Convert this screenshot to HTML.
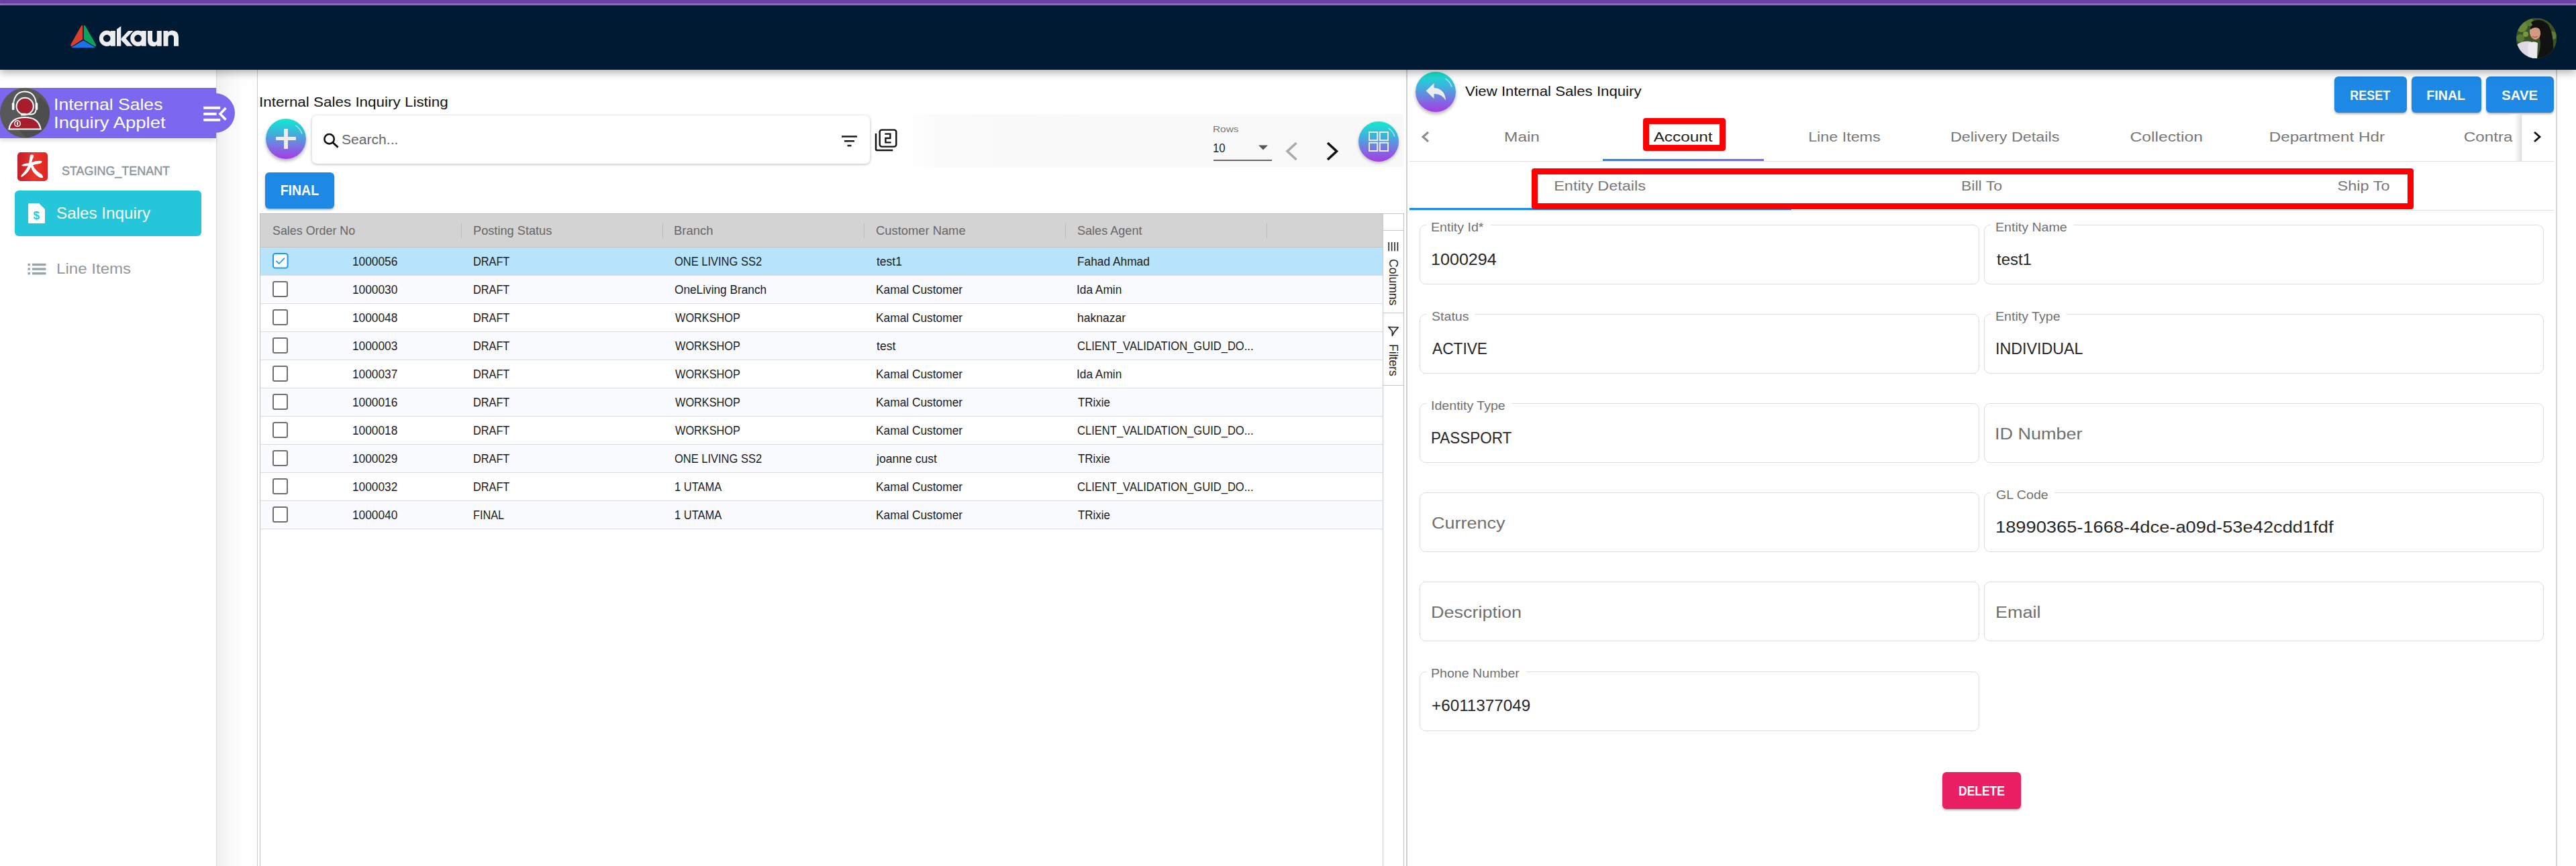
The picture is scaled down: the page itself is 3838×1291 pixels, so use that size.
<!DOCTYPE html><html><head><meta charset="utf-8"><title>akaun</title><style>
*{box-sizing:border-box;margin:0;padding:0}
html,body{width:3838px;height:1291px;overflow:hidden;background:#fff;font-family:"Liberation Sans",sans-serif;position:relative}
.a{position:absolute}
.t{position:absolute;white-space:nowrap;line-height:1}
</style></head><body>
<div class="a" style="left:0;top:0;width:3838px;height:6px;background:#6f43a7"></div>
<div class="a" style="left:0;top:5px;width:3838px;height:3px;background:#9474c0"></div>
<div class="a" style="left:0;top:8px;width:3838px;height:96px;background:#011a34;box-shadow:0 4px 12px rgba(0,0,0,.33);z-index:5"></div>
<svg class="a" style="left:0;top:0;z-index:6" width="280" height="90" viewBox="0 0 280 90">
<path d="M123.2 37.5 Q121.5 37.5 120.5 39.5 L105.8 65.5 Q104.5 68.5 106.5 69.5 L123.2 58.8 Z" fill="#d6402c"/>
<path d="M124.8 37.5 Q126.5 37.5 127.5 39.5 L142.5 65.5 Q143.8 68.5 141.8 69.5 L124.8 58.8 Z" fill="#0aa35c"/>
<path d="M124 60.2 L141 70.2 Q142 71.2 139.5 71.3 L108.5 71.3 Q106 71.2 107 70.2 Z" fill="#1b72e8"/>
<g fill="#ededed">
<path fill-rule="evenodd" d="M159.2 45.6 A11.3 11.6 0 1 0 159.2 68.9 A11.3 11.6 0 1 0 159.2 45.6 Z M159.2 51.8 A5.4 5.4 0 1 1 159.2 62.6 A5.4 5.4 0 1 1 159.2 51.8 Z"/>
<rect x="164.9" y="46" width="7" height="22.7"/>
<path d="M174 43.5 L180.3 39 L180.3 68.7 L174 68.7 Z"/>
<path d="M180.3 57.5 L191 46 L198.5 46 L187.5 57.2 L197.5 68.7 L189 68.7 L180.3 59.5 Z"/>
<path fill-rule="evenodd" d="M205.6 45.6 A11.3 11.6 0 1 0 205.6 68.9 A11.3 11.6 0 1 0 205.6 45.6 Z M205.6 51.8 A5.4 5.4 0 1 1 205.6 62.6 A5.4 5.4 0 1 1 205.6 51.8 Z"/>
<rect x="210.9" y="46" width="6.8" height="22.7"/>
<path d="M220 46 L227 46 L227 58.5 Q227 62.8 230.6 62.8 Q233.8 62.8 233.8 58.5 L233.8 46 L240.8 46 L240.8 68.7 L233.8 68.7 L233.8 66.5 Q232 69.2 228.5 69.2 Q220 69.2 220 59.5 Z"/>
<path d="M243.5 68.7 L243.5 46 L250.5 46 L250.5 48.3 Q252.3 45.5 256.3 45.5 Q266 45.5 266 55.5 L266 68.7 L259 68.7 L259 56.5 Q259 52.2 255 52.2 Q250.5 52.2 250.5 56.5 L250.5 68.7 Z"/>
</g></svg>
<div class="a" style="left:3749px;top:27px;width:60px;height:60px;border-radius:50%;overflow:hidden;z-index:6;background:#3d5a2a">
<svg width="60" height="60" viewBox="0 0 60 60">
<rect width="60" height="60" fill="#3c5226"/>
<circle cx="8" cy="12" r="9" fill="#6a8a3a"/><circle cx="20" cy="6" r="6" fill="#5c7c30"/><circle cx="6" cy="30" r="6" fill="#587a32"/><circle cx="54" cy="26" r="6" fill="#5f8034"/><circle cx="14" cy="24" r="4" fill="#7a9840"/>
<path d="M0 40 Q10 33 22 35 L27 60 L0 60 Z" fill="#dcd9e4"/>
<path d="M22 6 Q36 -2 48 10 Q58 28 54 60 L31 60 Q38 44 35 30 Q33 18 26 14 Z" fill="#121212"/>
<ellipse cx="28" cy="21.5" rx="8" ry="10.5" fill="#d39a84" transform="rotate(-12 28 21.5)"/>
<path d="M21 14 Q27 5 37 11 L36 17 Q29 11 21 17 Z" fill="#121212"/>
<path d="M24 27 Q28 30 32 27" fill="none" stroke="#b35a50" stroke-width="1.5"/>
<path d="M18 38 Q25 33 32 37 L31 60 L17 60 Z" fill="#ebe8f0"/>
</svg></div>
<div class="a" style="left:322px;top:104px;width:62px;height:1187px;background:linear-gradient(90deg,#efefef,#f8f8f8 30%,#fefefe 65%,#fff);border-left:1px solid #dadada"></div>
<div class="a" style="left:383px;top:104px;width:1px;height:1187px;background:#cccccc"></div>
<div class="a" style="left:0;top:131px;width:322px;height:74.5px;background:#7b68ee;box-shadow:0 4px 6px rgba(0,0,0,.12)"></div>
<div class="a" style="left:292px;top:139px;width:58px;height:59px;border-radius:0 29.5px 29.5px 0;background:#7b68ee"></div>
<svg class="a" style="left:0;top:131px" width="75" height="75" viewBox="0 0 75 75">
<defs><clipPath id="cc"><circle cx="37" cy="37.3" r="37"/></clipPath></defs>
<circle cx="37" cy="37.3" r="37" fill="#585858"/>
<path d="M60 14 L74 28 L74 75 L40 75 L20 55 Z" fill="#4d4d4d" clip-path="url(#cc)"/>
<path d="M19.5 31 Q19.5 5.5 37 5.5 Q54.5 5.5 54.5 31" fill="none" stroke="#fff" stroke-width="1.8"/>
<rect x="17.8" y="22" width="3.6" height="11" rx="1.6" fill="#fff"/><rect x="52.6" y="22" width="3.6" height="11" rx="1.6" fill="#fff"/>
<circle cx="37.2" cy="27.4" r="12.6" fill="#a61d2b" stroke="#fff" stroke-width="2"/>
<path d="M53.5 33 Q53 39 47 39.5 L34 39.5" fill="none" stroke="#fff" stroke-width="2"/><rect x="31" y="37.8" width="8" height="3.6" rx="1.5" fill="#fff"/>
<path d="M13.5 61.5 Q16 44 37 44 Q58 44 60.5 61.5 Z" fill="#a61d2b" stroke="#fff" stroke-width="2.2"/>
<circle cx="26" cy="53.3" r="5" fill="#fff"/><circle cx="26" cy="53.3" r="3.5" fill="#a61d2b"/><rect x="25" y="51" width="2" height="4.6" fill="#fff"/>
</svg>
<div class="t" style="left:80.35px;top:144.74px;font-size:23.7px;color:#fff;transform:scaleX(1.1214);transform-origin:0 50%;">Internal Sales</div>
<div class="t" style="left:80.26px;top:171.74px;font-size:23.7px;color:#fff;transform:scaleX(1.1610);transform-origin:0 50%;">Inquiry Applet</div>
<svg class="a" style="left:302px;top:157px" width="38" height="26" viewBox="0 0 38 26">
<rect x="1.2" y="1.8" width="25" height="3.9" fill="#fff"/><rect x="1.2" y="10.9" width="19.4" height="3.9" fill="#fff"/><rect x="1.2" y="19.8" width="25" height="3.9" fill="#fff"/>
<path d="M34.5 4 L26 12.8 L34.5 21.5" fill="none" stroke="#fff" stroke-width="3.6"/>
</svg>
<div class="a" style="left:26px;top:227px;width:45px;height:43px;border-radius:5px;background:linear-gradient(90deg,#c01f2c,#e8382a 55%,#e02222);overflow:hidden">
<svg width="45" height="43" viewBox="0 0 45 43"><path d="M19 4 Q25 2 24 7 Q22 11 21 15 Q29 12 36 13 Q38 15 33 17 Q27 18 23 19 Q26 27 35 32 Q39 35 38 38 Q33 39 28 34 Q22 29 20 22 Q16 31 8 36 Q4 38 6 34 Q12 28 16 20 Q11 21 6 20 Q7 17 17 16 Q18 11 19 4 Z" fill="#fff"/></svg></div>
<div class="t" style="left:91.88px;top:246.49px;font-size:18.8px;color:#8a949b;transform:scaleX(0.9547);transform-origin:0 50%;-webkit-text-stroke:0.45px #8a949b;">STAGING_TENANT</div>
<div class="a" style="left:22px;top:284px;width:278px;height:68px;border-radius:6px;background:#26c6da"></div>
<svg class="a" style="left:42px;top:303px" width="25" height="30" viewBox="0 0 25 30">
<path d="M1.5 0 L16 0 L25 9 L25 28.5 Q25 30 23.5 30 L1.5 30 Q0 30 0 28.5 L0 1.5 Q0 0 1.5 0 Z" fill="#fff"/>
<text x="12.3" y="23.8" font-size="17" font-weight="700" text-anchor="middle" fill="#26c6da" font-family="Liberation Sans">$</text>
</svg>
<div class="t" style="left:83.50px;top:306.84px;font-size:23.7px;color:#fff;transform:scaleX(1.0229);transform-origin:0 50%;">Sales Inquiry</div>
<svg class="a" style="left:41px;top:391.5px" width="28" height="18" viewBox="0 0 28 18">
<rect x="0.5" y="0.8" width="3.4" height="3.4" fill="#97a5ae"/><rect x="7" y="0.8" width="20.5" height="3.4" fill="#97a5ae"/>
<rect x="0.5" y="7.4" width="3.4" height="3.4" fill="#97a5ae"/><rect x="7" y="7.4" width="20.5" height="3.4" fill="#97a5ae"/>
<rect x="0.5" y="14" width="3.4" height="3.4" fill="#97a5ae"/><rect x="7" y="14" width="20.5" height="3.4" fill="#97a5ae"/>
</svg>
<div class="t" style="left:84.02px;top:389.85px;font-size:22.5px;color:#8f989e;transform:scaleX(1.0708);transform-origin:0 50%;">Line Items</div><div class="t" style="left:385.53px;top:142.12px;font-size:20.3px;color:#111;transform:scaleX(1.1059);transform-origin:0 50%;">Internal Sales Inquiry Listing</div>
<div class="a" style="left:396px;top:177px;width:60px;height:60px;border-radius:50%;background:linear-gradient(180deg,#12ead0 0%,#3fb0dc 38%,#7a74e2 68%,#a53be2 100%);box-shadow:0 3px 5px rgba(0,0,0,.3)">
<svg class="a" style="left:0;top:0" width="60" height="60" viewBox="0 0 60 60"><path d="M44.5 10 A24 24 0 0 1 54 22.5" fill="none" stroke="rgba(255,255,255,.65)" stroke-width="1.4"/></svg>
<div class="a" style="left:15.2px;top:26.8px;width:29.8px;height:5.4px;background:#ececec;border-radius:1px"></div>
<div class="a" style="left:27.3px;top:14.8px;width:5.4px;height:29.8px;background:#ececec;border-radius:1px"></div>
</div>
<div class="a" style="left:465px;top:172px;width:831px;height:72px;border-radius:7px;background:#fff;box-shadow:0 1px 4px rgba(0,0,0,.28)"></div>
<svg class="a" style="left:481px;top:198px" width="25" height="23" viewBox="0 0 25 23">
<circle cx="9.6" cy="9.2" r="7.2" fill="none" stroke="#111" stroke-width="2.6"/><path d="M14.6 14.2 L22.6 21.6" stroke="#111" stroke-width="2.8"/></svg>
<div class="t" style="left:508.84px;top:198.89px;font-size:19.5px;color:#666;transform:scaleX(1.0813);transform-origin:0 50%;">Search...</div>
<svg class="a" style="left:1254px;top:202px" width="24" height="17" viewBox="0 0 24 17">
<rect x="0" y="0.2" width="23" height="2.6" fill="#222"/><rect x="4" y="7" width="15" height="2.6" fill="#222"/><rect x="8.5" y="13.8" width="6" height="2.6" fill="#222"/></svg>
<svg class="a" style="left:1303px;top:192px" width="35" height="35" viewBox="0 0 35 35">
<path d="M2 7 L2 30.8 Q2 32 3.2 32 L27.3 32" fill="none" stroke="#111" stroke-width="2.5"/>
<rect x="7.7" y="1.6" width="24.6" height="25" rx="3" fill="none" stroke="#111" stroke-width="2.4"/>
<path d="M15.3 7.6 L23.4 7.6 L23.4 14 L16.4 14 L16.4 20.3 L24.6 20.3" fill="none" stroke="#111" stroke-width="2.3"/></svg>
<div class="a" style="left:1345px;top:170px;width:746px;height:79px;background:linear-gradient(90deg,rgba(250,250,250,0),#fafafa 8%,#f8f8f8)"></div>
<div class="t" style="left:1807.34px;top:186.17px;font-size:13.5px;color:#777;transform:scaleX(1.1380);transform-origin:0 50%;">Rows</div>
<div class="t" style="left:1807.32px;top:210.72px;font-size:19px;color:#222;transform:scaleX(0.8815);transform-origin:0 50%;">10</div>
<svg class="a" style="left:1874px;top:216px" width="16" height="8" viewBox="0 0 16 8"><path d="M1 0.5 L15 0.5 L8 7.5 Z" fill="#555"/></svg>
<div class="a" style="left:1807.5px;top:237.5px;width:87.5px;height:2px;background:#666"></div>
<svg class="a" style="left:1913px;top:210px" width="22" height="31" viewBox="0 0 22 31"><path d="M18.5 3 L5 15.5 L18.5 28" fill="none" stroke="#aaa" stroke-width="3.6"/></svg>
<svg class="a" style="left:1974px;top:210px" width="22" height="31" viewBox="0 0 22 31"><path d="M4 3 L17.5 15.5 L4 28" fill="none" stroke="#111" stroke-width="3.6"/></svg>
<div class="a" style="left:2024px;top:180.5px;width:60px;height:60px;border-radius:50%;background:linear-gradient(180deg,#12ead0 0%,#3fb0dc 38%,#7a74e2 68%,#a53be2 100%);box-shadow:0 2px 4px rgba(0,0,0,.25)">
<svg class="a" style="left:0;top:0" width="60" height="60" viewBox="0 0 60 60"><path d="M44.5 10 A24 24 0 0 1 54 22.5" fill="none" stroke="rgba(255,255,255,.65)" stroke-width="1.4"/></svg>
<svg class="a" style="left:15px;top:15.5px" width="30" height="30" viewBox="0 0 30 30">
<rect x="1" y="1" width="12.2" height="12.2" fill="none" stroke="#eee" stroke-width="2"/><rect x="16.8" y="1" width="12.2" height="12.2" fill="none" stroke="#eee" stroke-width="2"/>
<rect x="1" y="16.8" width="12.2" height="12.2" fill="none" stroke="#eee" stroke-width="2"/><rect x="16.8" y="16.8" width="12.2" height="12.2" fill="none" stroke="#eee" stroke-width="2"/></svg></div>
<div class="a" style="left:395px;top:257px;width:103px;height:54px;border-radius:6px;background:#1e88e5;box-shadow:0 2px 3px rgba(0,0,0,.3)"></div>
<div class="t" style="left:414.76px;top:274.47px;font-size:21.3px;color:#fff;font-weight:700;transform:scaleX(0.9155);transform-origin:31.74px 50%;">FINAL</div>
<div class="a" style="left:387px;top:318px;width:1705px;height:980px;border:1px solid #bcc1c6;background:#fff"></div>
<div class="a" style="left:388px;top:319px;width:1672px;height:50px;background:#d3d3d3;border-bottom:1px solid #c4c4c4"></div>
<div class="t" style="left:405.79px;top:336.13px;font-size:17.8px;color:#666;transform:scaleX(1.0048);transform-origin:0 50%;">Sales Order No</div>
<div class="t" style="left:704.51px;top:336.13px;font-size:17.8px;color:#666;transform:scaleX(1.0233);transform-origin:0 50%;">Posting Status</div>
<div class="t" style="left:1004.48px;top:336.13px;font-size:17.8px;color:#666;transform:scaleX(1.0394);transform-origin:0 50%;">Branch</div>
<div class="t" style="left:1305.07px;top:336.13px;font-size:17.8px;color:#666;transform:scaleX(1.0322);transform-origin:0 50%;">Customer Name</div>
<div class="t" style="left:1605.18px;top:336.13px;font-size:17.8px;color:#666;transform:scaleX(1.0163);transform-origin:0 50%;">Sales Agent</div>
<div class="a" style="left:687px;top:333px;width:1px;height:22px;background:#bdbdbd"></div>
<div class="a" style="left:987px;top:333px;width:1px;height:22px;background:#bdbdbd"></div>
<div class="a" style="left:1287px;top:333px;width:1px;height:22px;background:#bdbdbd"></div>
<div class="a" style="left:1587px;top:333px;width:1px;height:22px;background:#bdbdbd"></div>
<div class="a" style="left:1887px;top:333px;width:1px;height:22px;background:#bdbdbd"></div>
<div class="a" style="left:388px;top:369.0px;width:1672px;height:42.0px;background:#b7e4fb;border-bottom:1px solid #dadde2"></div>
<svg class="a" style="left:405.8px;top:377.2px" width="24" height="24" viewBox="0 0 24 24"><rect x="1" y="1" width="21.6" height="21.6" rx="3.2" fill="#fff" stroke="#2196f3" stroke-width="2"/><path d="M5.5 11.8 L9.8 16 L18 7.6" fill="none" stroke="#2196f3" stroke-width="1.7"/></svg>
<div class="t" style="left:524.68px;top:380.66px;font-size:18px;color:#1a1a1a;transform:scaleX(0.9600);transform-origin:0 50%;">1000056</div>
<div class="t" style="left:704.66px;top:380.66px;font-size:18px;color:#1a1a1a;transform:scaleX(0.9050);transform-origin:0 50%;">DRAFT</div>
<div class="t" style="left:1005.22px;top:380.66px;font-size:18px;color:#1a1a1a;transform:scaleX(0.9156);transform-origin:0 50%;">ONE LIVING SS2</div>
<div class="t" style="left:1305.74px;top:380.66px;font-size:18px;color:#1a1a1a;transform:scaleX(0.9712);transform-origin:0 50%;">test1</div>
<div class="t" style="left:1604.58px;top:380.66px;font-size:18px;color:#1a1a1a;transform:scaleX(0.9619);transform-origin:0 50%;">Fahad Ahmad</div>
<div class="a" style="left:388px;top:411.0px;width:1672px;height:42.0px;background:#f9fbfe;border-bottom:1px solid #dadde2"></div>
<div class="a" style="left:405.8px;top:419.2px;width:23.6px;height:23.6px;border:2px solid #6e6e6e;border-radius:3.2px;background:#fff"></div>
<div class="t" style="left:524.68px;top:422.66px;font-size:18px;color:#1a1a1a;transform:scaleX(0.9600);transform-origin:0 50%;">1000030</div>
<div class="t" style="left:704.66px;top:422.66px;font-size:18px;color:#1a1a1a;transform:scaleX(0.9050);transform-origin:0 50%;">DRAFT</div>
<div class="t" style="left:1005.18px;top:422.66px;font-size:18px;color:#1a1a1a;transform:scaleX(0.9583);transform-origin:0 50%;">OneLiving Branch</div>
<div class="t" style="left:1304.58px;top:422.66px;font-size:18px;color:#1a1a1a;transform:scaleX(0.9629);transform-origin:0 50%;">Kamal Customer</div>
<div class="t" style="left:1604.41px;top:422.66px;font-size:18px;color:#1a1a1a;transform:scaleX(0.9600);transform-origin:0 50%;">Ida Amin</div>
<div class="a" style="left:388px;top:453.0px;width:1672px;height:42.0px;background:#fff;border-bottom:1px solid #dadde2"></div>
<div class="a" style="left:405.8px;top:461.2px;width:23.6px;height:23.6px;border:2px solid #6e6e6e;border-radius:3.2px;background:#fff"></div>
<div class="t" style="left:524.68px;top:464.66px;font-size:18px;color:#1a1a1a;transform:scaleX(0.9600);transform-origin:0 50%;">1000048</div>
<div class="t" style="left:704.66px;top:464.66px;font-size:18px;color:#1a1a1a;transform:scaleX(0.9050);transform-origin:0 50%;">DRAFT</div>
<div class="t" style="left:1005.93px;top:464.66px;font-size:18px;color:#1a1a1a;transform:scaleX(0.9050);transform-origin:0 50%;">WORKSHOP</div>
<div class="t" style="left:1304.58px;top:464.66px;font-size:18px;color:#1a1a1a;transform:scaleX(0.9629);transform-origin:0 50%;">Kamal Customer</div>
<div class="t" style="left:1604.78px;top:464.66px;font-size:18px;color:#1a1a1a;transform:scaleX(0.9750);transform-origin:0 50%;">haknazar</div>
<div class="a" style="left:388px;top:495.0px;width:1672px;height:42.0px;background:#f9fbfe;border-bottom:1px solid #dadde2"></div>
<div class="a" style="left:405.8px;top:503.2px;width:23.6px;height:23.6px;border:2px solid #6e6e6e;border-radius:3.2px;background:#fff"></div>
<div class="t" style="left:524.68px;top:506.66px;font-size:18px;color:#1a1a1a;transform:scaleX(0.9600);transform-origin:0 50%;">1000003</div>
<div class="t" style="left:704.66px;top:506.66px;font-size:18px;color:#1a1a1a;transform:scaleX(0.9050);transform-origin:0 50%;">DRAFT</div>
<div class="t" style="left:1005.93px;top:506.66px;font-size:18px;color:#1a1a1a;transform:scaleX(0.9050);transform-origin:0 50%;">WORKSHOP</div>
<div class="t" style="left:1305.73px;top:506.66px;font-size:18px;color:#1a1a1a;transform:scaleX(0.9750);transform-origin:0 50%;">test</div>
<div class="t" style="left:1605.16px;top:506.66px;font-size:18px;color:#1a1a1a;transform:scaleX(0.9199);transform-origin:0 50%;">CLIENT_VALIDATION_GUID_DO...</div>
<div class="a" style="left:388px;top:537.0px;width:1672px;height:42.0px;background:#fff;border-bottom:1px solid #dadde2"></div>
<div class="a" style="left:405.8px;top:545.2px;width:23.6px;height:23.6px;border:2px solid #6e6e6e;border-radius:3.2px;background:#fff"></div>
<div class="t" style="left:524.68px;top:548.66px;font-size:18px;color:#1a1a1a;transform:scaleX(0.9600);transform-origin:0 50%;">1000037</div>
<div class="t" style="left:704.66px;top:548.66px;font-size:18px;color:#1a1a1a;transform:scaleX(0.9050);transform-origin:0 50%;">DRAFT</div>
<div class="t" style="left:1005.93px;top:548.66px;font-size:18px;color:#1a1a1a;transform:scaleX(0.9050);transform-origin:0 50%;">WORKSHOP</div>
<div class="t" style="left:1304.58px;top:548.66px;font-size:18px;color:#1a1a1a;transform:scaleX(0.9629);transform-origin:0 50%;">Kamal Customer</div>
<div class="t" style="left:1604.41px;top:548.66px;font-size:18px;color:#1a1a1a;transform:scaleX(0.9600);transform-origin:0 50%;">Ida Amin</div>
<div class="a" style="left:388px;top:579.0px;width:1672px;height:42.0px;background:#f9fbfe;border-bottom:1px solid #dadde2"></div>
<div class="a" style="left:405.8px;top:587.2px;width:23.6px;height:23.6px;border:2px solid #6e6e6e;border-radius:3.2px;background:#fff"></div>
<div class="t" style="left:524.68px;top:590.66px;font-size:18px;color:#1a1a1a;transform:scaleX(0.9600);transform-origin:0 50%;">1000016</div>
<div class="t" style="left:704.66px;top:590.66px;font-size:18px;color:#1a1a1a;transform:scaleX(0.9050);transform-origin:0 50%;">DRAFT</div>
<div class="t" style="left:1005.93px;top:590.66px;font-size:18px;color:#1a1a1a;transform:scaleX(0.9050);transform-origin:0 50%;">WORKSHOP</div>
<div class="t" style="left:1304.58px;top:590.66px;font-size:18px;color:#1a1a1a;transform:scaleX(0.9629);transform-origin:0 50%;">Kamal Customer</div>
<div class="t" style="left:1605.62px;top:590.66px;font-size:18px;color:#1a1a1a;transform:scaleX(0.9421);transform-origin:0 50%;">TRixie</div>
<div class="a" style="left:388px;top:621.0px;width:1672px;height:42.0px;background:#fff;border-bottom:1px solid #dadde2"></div>
<div class="a" style="left:405.8px;top:629.2px;width:23.6px;height:23.6px;border:2px solid #6e6e6e;border-radius:3.2px;background:#fff"></div>
<div class="t" style="left:524.68px;top:632.66px;font-size:18px;color:#1a1a1a;transform:scaleX(0.9600);transform-origin:0 50%;">1000018</div>
<div class="t" style="left:704.66px;top:632.66px;font-size:18px;color:#1a1a1a;transform:scaleX(0.9050);transform-origin:0 50%;">DRAFT</div>
<div class="t" style="left:1005.93px;top:632.66px;font-size:18px;color:#1a1a1a;transform:scaleX(0.9050);transform-origin:0 50%;">WORKSHOP</div>
<div class="t" style="left:1304.58px;top:632.66px;font-size:18px;color:#1a1a1a;transform:scaleX(0.9629);transform-origin:0 50%;">Kamal Customer</div>
<div class="t" style="left:1605.16px;top:632.66px;font-size:18px;color:#1a1a1a;transform:scaleX(0.9199);transform-origin:0 50%;">CLIENT_VALIDATION_GUID_DO...</div>
<div class="a" style="left:388px;top:663.0px;width:1672px;height:42.0px;background:#f9fbfe;border-bottom:1px solid #dadde2"></div>
<div class="a" style="left:405.8px;top:671.2px;width:23.6px;height:23.6px;border:2px solid #6e6e6e;border-radius:3.2px;background:#fff"></div>
<div class="t" style="left:524.68px;top:674.66px;font-size:18px;color:#1a1a1a;transform:scaleX(0.9600);transform-origin:0 50%;">1000029</div>
<div class="t" style="left:704.66px;top:674.66px;font-size:18px;color:#1a1a1a;transform:scaleX(0.9050);transform-origin:0 50%;">DRAFT</div>
<div class="t" style="left:1005.22px;top:674.66px;font-size:18px;color:#1a1a1a;transform:scaleX(0.9156);transform-origin:0 50%;">ONE LIVING SS2</div>
<div class="t" style="left:1306.43px;top:674.66px;font-size:18px;color:#1a1a1a;transform:scaleX(0.9764);transform-origin:0 50%;">joanne cust</div>
<div class="t" style="left:1605.62px;top:674.66px;font-size:18px;color:#1a1a1a;transform:scaleX(0.9421);transform-origin:0 50%;">TRixie</div>
<div class="a" style="left:388px;top:705.0px;width:1672px;height:42.0px;background:#fff;border-bottom:1px solid #dadde2"></div>
<div class="a" style="left:405.8px;top:713.2px;width:23.6px;height:23.6px;border:2px solid #6e6e6e;border-radius:3.2px;background:#fff"></div>
<div class="t" style="left:524.68px;top:716.66px;font-size:18px;color:#1a1a1a;transform:scaleX(0.9600);transform-origin:0 50%;">1000032</div>
<div class="t" style="left:704.66px;top:716.66px;font-size:18px;color:#1a1a1a;transform:scaleX(0.9050);transform-origin:0 50%;">DRAFT</div>
<div class="t" style="left:1004.74px;top:716.66px;font-size:18px;color:#1a1a1a;transform:scaleX(0.9181);transform-origin:0 50%;">1 UTAMA</div>
<div class="t" style="left:1304.58px;top:716.66px;font-size:18px;color:#1a1a1a;transform:scaleX(0.9629);transform-origin:0 50%;">Kamal Customer</div>
<div class="t" style="left:1605.16px;top:716.66px;font-size:18px;color:#1a1a1a;transform:scaleX(0.9199);transform-origin:0 50%;">CLIENT_VALIDATION_GUID_DO...</div>
<div class="a" style="left:388px;top:747.0px;width:1672px;height:42.0px;background:#f9fbfe;border-bottom:1px solid #dadde2"></div>
<div class="a" style="left:405.8px;top:755.2px;width:23.6px;height:23.6px;border:2px solid #6e6e6e;border-radius:3.2px;background:#fff"></div>
<div class="t" style="left:524.68px;top:758.66px;font-size:18px;color:#1a1a1a;transform:scaleX(0.9600);transform-origin:0 50%;">1000040</div>
<div class="t" style="left:704.66px;top:758.66px;font-size:18px;color:#1a1a1a;transform:scaleX(0.9050);transform-origin:0 50%;">FINAL</div>
<div class="t" style="left:1004.74px;top:758.66px;font-size:18px;color:#1a1a1a;transform:scaleX(0.9181);transform-origin:0 50%;">1 UTAMA</div>
<div class="t" style="left:1304.58px;top:758.66px;font-size:18px;color:#1a1a1a;transform:scaleX(0.9629);transform-origin:0 50%;">Kamal Customer</div>
<div class="t" style="left:1605.62px;top:758.66px;font-size:18px;color:#1a1a1a;transform:scaleX(0.9421);transform-origin:0 50%;">TRixie</div>
<div class="a" style="left:2060px;top:318px;width:31px;height:980px;border-left:1px solid #c3c8cd;border-top:1px solid #c3c8cd;background:#fff"></div>
<div class="a" style="left:2060px;top:343px;width:31px;height:1px;background:#c3c8cd"></div>
<div class="a" style="left:2060px;top:466px;width:31px;height:1px;background:#c3c8cd"></div>
<div class="a" style="left:2060px;top:574px;width:31px;height:1px;background:#c3c8cd"></div>
<svg class="a" style="left:2068px;top:361.3px" width="16" height="14" viewBox="0 0 16 14"><rect x="0.4" y="0" width="1.6" height="13.3" fill="#222"/><rect x="4.8" y="0" width="1.6" height="13.3" fill="#222"/><rect x="9.2" y="0" width="1.6" height="13.3" fill="#222"/><rect x="13.6" y="0" width="1.6" height="13.3" fill="#222"/></svg>
<div class="t" style="left:2066.5px;top:385.5px;font-size:17.6px;color:#222;writing-mode:vertical-rl">Columns</div>
<svg class="a" style="left:2067px;top:486px" width="18" height="16" viewBox="0 0 18 16"><path d="M1.8 1.5 L16.2 2 L10.5 8.6 L7.4 14.4 L7.4 7.8 Z" fill="none" stroke="#222" stroke-width="1.7" stroke-linejoin="round"/></svg>
<div class="t" style="left:2066.5px;top:513px;font-size:17.6px;color:#222;writing-mode:vertical-rl">Filters</div>
<div class="a" style="left:2095px;top:104px;width:2px;height:1187px;background:#d0d0d0"></div><div class="a" style="left:3808px;top:104px;width:1.5px;height:1187px;background:#d6d6d6"></div>
<div class="a" style="left:2109px;top:107px;width:60px;height:60px;border-radius:50%;background:linear-gradient(180deg,#12ead0 0%,#3fb0dc 38%,#7a74e2 68%,#a53be2 100%);box-shadow:0 3px 5px rgba(0,0,0,.3)">
<svg class="a" style="left:0;top:0" width="60" height="60" viewBox="0 0 60 60"><path d="M44.5 10 A24 24 0 0 1 54 22.5" fill="none" stroke="rgba(255,255,255,.65)" stroke-width="1.4"/></svg><svg class="a" style="left:14px;top:16px" width="32" height="28" viewBox="0 0 32 28"><path d="M13.5 1 L1.5 12.5 L13.5 24 L13.5 17 Q25 16 31 27 Q30 9 13.5 8 Z" fill="#ededed"/></svg></div>
<div class="t" style="left:2183.20px;top:126.36px;font-size:20.6px;color:#111;transform:scaleX(1.0785);transform-origin:0 50%;">View Internal Sales Inquiry</div>
<div class="a" style="left:3478px;top:114px;width:108px;height:54px;border-radius:6px;background:#1e88e5;box-shadow:0 2px 3px rgba(0,0,0,.3)"></div>
<div class="t" style="left:3497.05px;top:131.55px;font-size:20.5px;color:#fff;font-weight:700;transform:scaleX(0.8748);transform-origin:34.75px 50%;">RESET</div>
<div class="a" style="left:3593px;top:114px;width:104px;height:54px;border-radius:6px;background:#1e88e5;box-shadow:0 2px 3px rgba(0,0,0,.3)"></div>
<div class="t" style="left:3614.26px;top:131.55px;font-size:20.5px;color:#fff;font-weight:700;transform:scaleX(0.9563);transform-origin:30.54px 50%;">FINAL</div>
<div class="a" style="left:3704px;top:114px;width:101px;height:54px;border-radius:6px;background:#1e88e5;box-shadow:0 2px 3px rgba(0,0,0,.3)"></div>
<div class="t" style="left:3727.25px;top:131.55px;font-size:20.5px;color:#fff;font-weight:700;transform:scaleX(0.9884);transform-origin:27.05px 50%;">SAVE</div>
<div class="a" style="left:2100px;top:240px;width:1705px;height:1px;background:#e0e0e0"></div>
<svg class="a" style="left:2116px;top:195px" width="16" height="18" viewBox="0 0 16 18"><path d="M12 2 L4 9 L12 16" fill="none" stroke="#8c8c8c" stroke-width="3"/></svg>
<div class="a" style="left:3736px;top:170px;width:20px;height:70px;background:linear-gradient(90deg,rgba(255,255,255,0),rgba(255,255,255,.9) 50%,rgba(225,225,225,.9))"></div>
<div class="a" style="left:3756px;top:170px;width:1px;height:70px;background:#dcdcdc"></div>
<svg class="a" style="left:3772px;top:195px" width="16" height="18" viewBox="0 0 16 18"><path d="M4 2 L12 9 L4 16" fill="none" stroke="#111" stroke-width="2.8"/></svg>
<div class="a" style="left:2148px;top:170px;width:1608px;height:70px;overflow:hidden">
<div class="t" style="left:97.28px;top:24.09px;font-size:20.8px;color:#777;transform:scaleX(1.1707);transform-origin:22.72px 50%;">Main</div>
<div class="t" style="left:322.48px;top:24.09px;font-size:20.8px;color:#222;transform:scaleX(1.1699);transform-origin:37.52px 50%;">Account</div>
<div class="t" style="left:551.54px;top:24.09px;font-size:20.8px;color:#777;transform:scaleX(1.1209);transform-origin:48.46px 50%;">Line Items</div>
<div class="t" style="left:767.28px;top:24.09px;font-size:20.8px;color:#777;transform:scaleX(1.1244);transform-origin:72.72px 50%;">Delivery Details</div>
<div class="t" style="left:1034.48px;top:24.09px;font-size:20.8px;color:#777;transform:scaleX(1.1875);transform-origin:45.52px 50%;">Collection</div>
<div class="t" style="left:1245.34px;top:24.09px;font-size:20.8px;color:#777;transform:scaleX(1.1651);transform-origin:74.66px 50%;">Department Hdr</div>
<div class="t" style="left:1528.26px;top:24.09px;font-size:20.8px;color:#777;transform:scaleX(1.1617);transform-origin:31.74px 50%;">Contra</div>
</div>
<div class="a" style="left:2388px;top:236.5px;width:240px;height:3px;background:linear-gradient(90deg,#1e88e5,#7b68ee)"></div>
<div class="a" style="left:2448px;top:176px;width:123px;height:49px;border:9px solid #fe0000;border-radius:4px"></div>
<div class="a" style="left:2100px;top:313px;width:1705px;height:1px;background:#e0e0e0"></div>
<div class="a" style="left:2100px;top:310px;width:569px;height:3px;background:#1e88e5"></div>
<div class="t" style="left:2323.23px;top:267.49px;font-size:20.8px;color:#777;transform:scaleX(1.1268);transform-origin:61.17px 50%;">Entity Details</div>
<div class="t" style="left:2925.13px;top:267.49px;font-size:20.8px;color:#777;transform:scaleX(1.1080);transform-origin:27.97px 50%;">Bill To</div>
<div class="t" style="left:3487.26px;top:267.49px;font-size:20.8px;color:#777;transform:scaleX(1.1312);transform-origin:34.54px 50%;">Ship To</div>
<div class="a" style="left:2282px;top:251px;width:1314px;height:61px;border:9px solid #fe0000;border-radius:4px"></div>
<div class="a" style="left:2115px;top:335.0px;width:834px;height:89px;border:1px solid #dddddd;border-radius:9px"></div>
<div class="a" style="left:2125px;top:333.0px;width:95.6px;height:5px;background:#fff"></div>
<div class="t" style="left:2132.09px;top:330.92px;font-size:17.7px;color:#707070;transform:scaleX(1.1080);transform-origin:0 50%;">Entity Id*</div>
<div class="t" style="left:2131.99px;top:375.61px;font-size:23.5px;color:#262626;transform:scaleX(1.0684);transform-origin:0 50%;">1000294</div>
<div class="a" style="left:2956px;top:335.0px;width:834px;height:89px;border:1px solid #dddddd;border-radius:9px"></div>
<div class="a" style="left:2966px;top:333.0px;width:123.3px;height:5px;background:#fff"></div>
<div class="t" style="left:2973.09px;top:330.92px;font-size:17.7px;color:#707070;transform:scaleX(1.1080);transform-origin:0 50%;">Entity Name</div>
<div class="t" style="left:2974.54px;top:375.61px;font-size:23.5px;color:#262626;transform:scaleX(1.0193);transform-origin:0 50%;">test1</div>
<div class="a" style="left:2115px;top:468.1px;width:834px;height:89px;border:1px solid #dddddd;border-radius:9px"></div>
<div class="a" style="left:2125px;top:466.1px;width:73.0px;height:5px;background:#fff"></div>
<div class="t" style="left:2132.81px;top:464.02px;font-size:17.7px;color:#707070;transform:scaleX(1.1080);transform-origin:0 50%;">Status</div>
<div class="t" style="left:2133.86px;top:508.71px;font-size:23.5px;color:#262626;transform:scaleX(0.9663);transform-origin:0 50%;">ACTIVE</div>
<div class="a" style="left:2956px;top:468.1px;width:834px;height:89px;border:1px solid #dddddd;border-radius:9px"></div>
<div class="a" style="left:2966px;top:466.1px;width:113.2px;height:5px;background:#fff"></div>
<div class="t" style="left:2973.09px;top:464.02px;font-size:17.7px;color:#707070;transform:scaleX(1.1080);transform-origin:0 50%;">Entity Type</div>
<div class="t" style="left:2972.75px;top:508.71px;font-size:23.5px;color:#262626;transform:scaleX(0.9896);transform-origin:0 50%;">INDIVIDUAL</div>
<div class="a" style="left:2115px;top:601.2px;width:834px;height:89px;border:1px solid #dddddd;border-radius:9px"></div>
<div class="a" style="left:2125px;top:599.2px;width:127.2px;height:5px;background:#fff"></div>
<div class="t" style="left:2131.89px;top:597.12px;font-size:17.7px;color:#707070;transform:scaleX(1.1080);transform-origin:0 50%;">Identity Type</div>
<div class="t" style="left:2132.06px;top:641.81px;font-size:23.5px;color:#262626;transform:scaleX(0.9559);transform-origin:0 50%;">PASSPORT</div>
<div class="a" style="left:2956px;top:601.2px;width:834px;height:89px;border:1px solid #dddddd;border-radius:9px"></div>
<div class="t" style="left:2972.41px;top:636.21px;font-size:23.5px;color:#6f6f6f;transform:scaleX(1.1490);transform-origin:0 50%;">ID Number</div>
<div class="a" style="left:2115px;top:734.3px;width:834px;height:89px;border:1px solid #dddddd;border-radius:9px"></div>
<div class="t" style="left:2132.53px;top:769.31px;font-size:23.5px;color:#6f6f6f;transform:scaleX(1.1489);transform-origin:0 50%;">Currency</div>
<div class="a" style="left:2956px;top:734.3px;width:834px;height:89px;border:1px solid #dddddd;border-radius:9px"></div>
<div class="a" style="left:2966px;top:732.3px;width:94.9px;height:5px;background:#fff"></div>
<div class="t" style="left:2973.71px;top:730.22px;font-size:17.7px;color:#707070;transform:scaleX(1.1080);transform-origin:0 50%;">GL Code</div>
<div class="t" style="left:2972.82px;top:774.91px;font-size:23.5px;color:#262626;transform:scaleX(1.1607);transform-origin:0 50%;">18990365-1668-4dce-a09d-53e42cdd1fdf</div>
<div class="a" style="left:2115px;top:867.4px;width:834px;height:89px;border:1px solid #dddddd;border-radius:9px"></div>
<div class="t" style="left:2131.69px;top:902.41px;font-size:23.5px;color:#6f6f6f;transform:scaleX(1.1490);transform-origin:0 50%;">Description</div>
<div class="a" style="left:2956px;top:867.4px;width:834px;height:89px;border:1px solid #dddddd;border-radius:9px"></div>
<div class="t" style="left:2972.69px;top:902.41px;font-size:23.5px;color:#6f6f6f;transform:scaleX(1.1490);transform-origin:0 50%;">Email</div>
<div class="a" style="left:2115px;top:1000.5px;width:834px;height:89px;border:1px solid #dddddd;border-radius:9px"></div>
<div class="a" style="left:2125px;top:998.5px;width:149.0px;height:5px;background:#fff"></div>
<div class="t" style="left:2132.09px;top:996.42px;font-size:17.7px;color:#707070;transform:scaleX(1.1080);transform-origin:0 50%;">Phone Number</div>
<div class="t" style="left:2132.72px;top:1041.11px;font-size:23.5px;color:#262626;transform:scaleX(1.0326);transform-origin:0 50%;">+6011377049</div>
<div class="a" style="left:2894px;top:1151px;width:117px;height:55px;border-radius:6px;background:#e91e63;box-shadow:0 2px 3px rgba(0,0,0,.3)"></div>
<div class="t" style="left:2911.78px;top:1169.45px;font-size:20.5px;color:#fff;font-weight:700;transform:scaleX(0.8514);transform-origin:40.72px 50%;">DELETE</div>
</body></html>
